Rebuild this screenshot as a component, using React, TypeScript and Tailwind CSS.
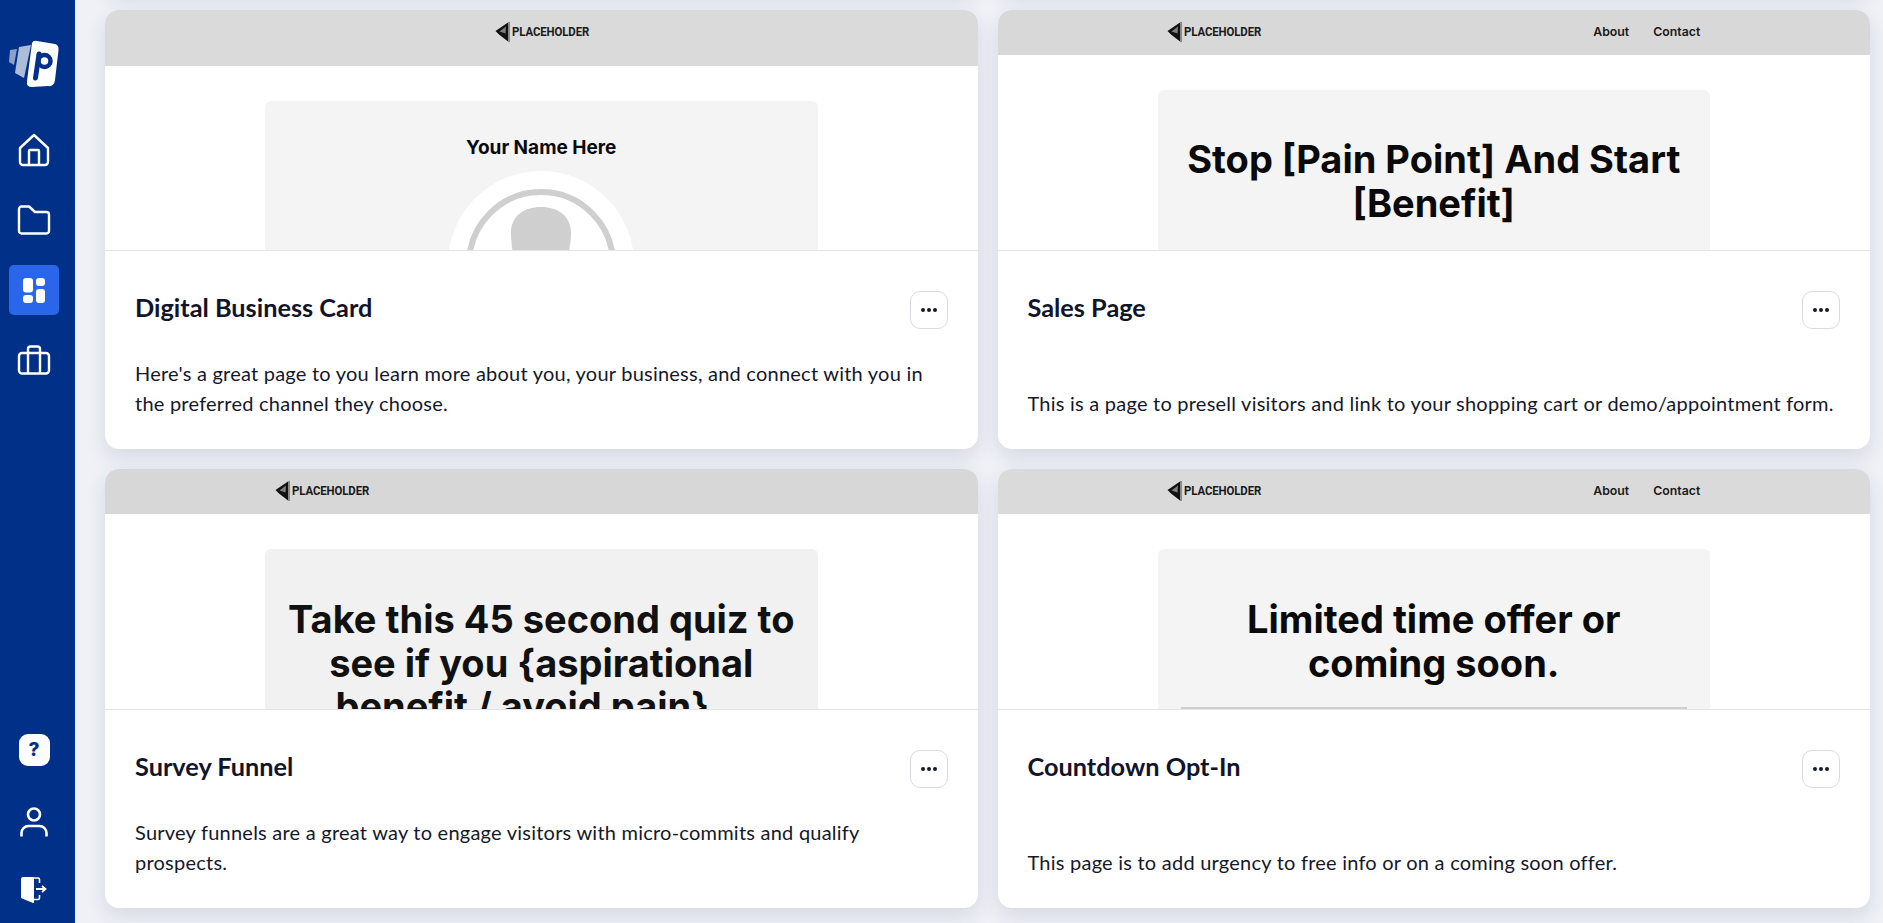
import type { ReactNode } from 'react';

const headline = "font-['Inter',sans-serif] font-bold text-[38px] leading-[43.5px] text-center";

function PlaceholderLogo() {
  return (
    <div className="flex items-center gap-[2px]">
      <svg width="15" height="20" viewBox="0 0 15 20">
        <path d="M13 0.500 L0.500 9 L4 12.500 L13 19.500 Z" fill="#111" />
        <path d="M11 4.500 L4.500 9.500 L10.500 11.500 Z" fill="#dadada" opacity="0.55" />
        <path d="M14 0 V20" stroke="#111" strokeWidth="0.800" />
      </svg>
      <span className="font-['Roboto',sans-serif] font-bold text-[12px] tracking-[-0.1px] text-[#1a1a1a] scale-x-95 origin-left w-[75px]">
        PLACEHOLDER
      </span>
    </div>
  );
}

function MockNav({ links, centered, bg, height }: { links?: boolean; centered?: boolean; bg: string; height: string }) {
  return (
    <div className={`${bg} ${height} shrink-0 pt-[10px]`}>
      <div className={`w-[553px] h-[24px] mx-auto px-[10px] flex items-center ${centered ? 'justify-center' : 'justify-between'}`}>
        <PlaceholderLogo />
        {links && (
          <div className="flex gap-[24px] font-['Inter',sans-serif] font-semibold text-[12.300px] leading-[24px] text-[#1a1a1a]">
            <span>About</span>
            <span>Contact</span>
          </div>
        )}
      </div>
    </div>
  );
}

function TemplateCard({ preview, title, description }: { preview?: ReactNode; title?: string; description?: string }) {
  return (
    <div className="h-[439px] bg-white rounded-[14px] shadow-[0_8px_20px_rgba(40,45,70,0.12)] flex flex-col overflow-hidden">
      <div className="h-[241px] shrink-0 overflow-hidden border-b border-[#e4e5e8]">{preview}</div>
      <div className="flex-1 flex flex-col px-[30px] pt-[40px] pb-[31px]">
        <div className="flex items-start justify-between">
          <h3 className="font-['Lato',sans-serif] font-bold text-[25.300px] leading-[36px] text-[#11142a] mt-[-2px]">{title}</h3>
          <button className="w-[38px] h-[38px] border border-[#d9dbe2] rounded-[10px] flex items-center justify-center gap-[2px]">
            <span className="w-[4px] h-[4px] rounded-full bg-[#14182b]" />
            <span className="w-[4px] h-[4px] rounded-full bg-[#14182b]" />
            <span className="w-[4px] h-[4px] rounded-full bg-[#14182b]" />
          </button>
        </div>
        <p className="mt-auto font-['Lato',sans-serif] text-[20px] tracking-[0.23px] leading-[30px] text-[#14182b]">{description}</p>
      </div>
    </div>
  );
}

function Avatar() {
  return (
    <svg width="186" height="100" viewBox="0 0 186 100" className="mx-auto mt-[11px]">
      <circle cx="93" cy="93" r="93" fill="#fff" />
      <circle cx="93" cy="93" r="72" fill="none" stroke="#cfcfcf" strokeWidth="6" />
      <path d="M63 62 C63 45 76 36 93 36 C110 36 123 45 123 62 C123 72 121 76 121.500 82 V100 H64.500 V82 C64.500 76 63 72 63 62 Z" fill="#cfcfcf" />
    </svg>
  );
}

const railIcon = 'w-[50px] h-[50px] flex items-center justify-center';

export default function App() {
  return (
    <div className="h-screen flex overflow-hidden bg-[#eff1f7]">
      <aside className="relative z-10 w-[75px] shrink-0 bg-[#003087] flex flex-col items-center pr-[7px] pb-[8px]">
        <div className="h-[125px] pt-[40px] flex justify-center shrink-0">
          <svg width="52" height="48" viewBox="0 0 52 48">
            <path d="M2 10 L9 9 L6 25 L1 22 Z" fill="#fff" opacity="0.55" />
            <path d="M11 7 L23 5 L16 38 L7 33 Z" fill="#fff" opacity="0.68" />
            <path d="M24 3 Q25 0 29 1 L47 4 Q51 5 50.500 10 L47 40 Q46 47 40 46 L24 47 Q18 47 19 41 Z" fill="#fff" />
            <path d="M27.500 38 L31 14" stroke="#003087" strokeWidth="5" strokeLinecap="round" fill="none" />
            <circle cx="36.500" cy="21" r="6" fill="none" stroke="#003087" strokeWidth="4.500" />
          </svg>
        </div>

        <nav className="flex flex-col gap-[20px]">
          <div className={railIcon}>
            <svg width="32" height="34" viewBox="0 0 32 34" fill="none" stroke="#fff" strokeWidth="2.400" strokeLinejoin="round">
              <path d="M2 15 L16 2 L30 15 V29 a3 3 0 0 1 -3 3 H5 a3 3 0 0 1 -3 -3 Z" />
              <path d="M11 32 V18 a1 1 0 0 1 1 -1 h8 a1 1 0 0 1 1 1 V32" />
            </svg>
          </div>
          <div className={railIcon}>
            <svg width="34" height="30" viewBox="0 0 34 30" fill="none" stroke="#fff" strokeWidth="2.400" strokeLinejoin="round">
              <path d="M2 4 a2.500 2.500 0 0 1 2.500 -2.500 H12 L18 7 H29.500 a2.500 2.500 0 0 1 2.500 2.500 V26 a2.500 2.500 0 0 1 -2.500 2.500 H4.500 a2.500 2.500 0 0 1 -2.500 -2.500 Z" />
            </svg>
          </div>
          <div className={`${railIcon} bg-[#2966ea] rounded-[5px]`}>
            <svg width="22" height="25" viewBox="0 0 22 25" fill="#fff">
              <rect x="0" y="0" width="10" height="14.500" rx="3" />
              <rect x="13" y="0" width="9" height="8" rx="3" />
              <rect x="0" y="17" width="10" height="8" rx="3" />
              <rect x="13" y="11" width="9" height="14" rx="3" />
            </svg>
          </div>
          <div className={railIcon}>
            <svg width="34" height="30" viewBox="0 0 34 30" fill="none" stroke="#fff" strokeWidth="2.400" strokeLinejoin="round">
              <rect x="2" y="8" width="30" height="20.500" rx="3" />
              <path d="M11 28.500 V4 a2.500 2.500 0 0 1 2.500 -2.500 h7 a2.500 2.500 0 0 1 2.500 2.500 V28.500" />
            </svg>
          </div>
        </nav>

        <div className="mt-auto flex flex-col gap-[20px]">
          <div className={railIcon}>
            <div className="w-[31px] h-[32px] bg-white rounded-[9px] flex items-center justify-center font-['Inter',sans-serif] font-extrabold text-[19px] text-[#003087]">
              ?
            </div>
          </div>
          <div className={railIcon}>
            <svg width="28" height="30" viewBox="0 0 28 30" fill="none" stroke="#fff" strokeWidth="2.600" className="mt-[3px]">
              <circle cx="14" cy="7.500" r="6" />
              <path d="M1.500 29.500 V26 a7 7 0 0 1 7 -7 h11 a7 7 0 0 1 7 7 V29.500" />
            </svg>
          </div>
          <div className={railIcon}>
            <svg width="26" height="26" viewBox="0 0 26 26">
              <path d="M0 2 a2 2 0 0 1 2 -2 H11 a2 2 0 0 1 2 2 V25 a1 1 0 0 1 -1.500 0.800 L1 21.500 a2 2 0 0 1 -1 -1.800 Z" fill="#fff" />
              <path d="M11 1 H17 a1.500 1.500 0 0 1 1.500 1.500 V6 M18.500 18 V21 a1.500 1.500 0 0 1 -1.500 1.500 H12" fill="none" stroke="#fff" strokeWidth="1.600" />
              <path d="M15 12 H24 M21 9 L24.500 12 L21 15" fill="none" stroke="#fff" strokeWidth="1.800" />
            </svg>
          </div>
        </div>
      </aside>

      <main className="flex-1 min-w-0 pl-[30px] pr-[13px]">
        {/* list is scrolled, the row above sits just out of view */}
        <div className="mt-[-449px] grid grid-cols-2 gap-[20px]">
          <TemplateCard />
          <TemplateCard />

          <TemplateCard
            title="Digital Business Card"
            description="Here's a great page to you learn more about you, your business, and connect with you in the preferred channel they choose."
            preview={
              <>
                <MockNav centered bg="bg-[#dadada]" height="h-[56px]" />
                <div className="w-[553px] h-[300px] mx-auto mt-[35px] bg-[#f4f4f4] rounded-[6px] pt-[35px]">
                  <div className="font-['Inter',sans-serif] font-bold text-[19px] leading-[24px] text-center text-[#0a0a0a]">Your Name Here</div>
                  <Avatar />
                </div>
              </>
            }
          />
          <TemplateCard
            title="Sales Page"
            description="This is a page to presell visitors and link to your shopping cart or demo/appointment form."
            preview={
              <>
                <MockNav links bg="bg-[#d8d8d8]" height="h-[45px]" />
                <div className="w-[552px] h-[300px] mx-auto mt-[35px] bg-[#f4f4f4] rounded-[6px] pt-[48px] px-[20px]">
                  <div className={`${headline} text-[#0a0a0a]`}>Stop [Pain Point] And Start [Benefit]</div>
                </div>
              </>
            }
          />

          <TemplateCard
            title="Survey Funnel"
            description="Survey funnels are a great way to engage visitors with micro-commits and qualify prospects."
            preview={
              <>
                <MockNav bg="bg-[#d7d7d7]" height="h-[45px]" />
                <div className="w-[553px] h-[300px] mx-auto mt-[35px] bg-[#f1f1f1] rounded-[6px] pt-[49px] px-[20px]">
                  <div className={`${headline} text-[#111]`}>Take this 45 second quiz to see if you {'{aspirational'} benefit / avoid pain{'}'}...</div>
                </div>
              </>
            }
          />
          <TemplateCard
            title="Countdown Opt-In"
            description="This page is to add urgency to free info or on a coming soon offer."
            preview={
              <>
                <MockNav links bg="bg-[#dadada]" height="h-[45px]" />
                <div className="w-[552px] h-[300px] mx-auto mt-[35px] bg-[#f4f4f4] rounded-[6px] pt-[49px] px-[23px]">
                  <div className={`${headline} text-[#0a0a0a] px-[40px]`}>Limited time offer or coming soon.</div>
                  <div className="h-[4px] mt-[22px] bg-[#cfcfcf]" />
                </div>
              </>
            }
          />
        </div>
      </main>
    </div>
  );
}
